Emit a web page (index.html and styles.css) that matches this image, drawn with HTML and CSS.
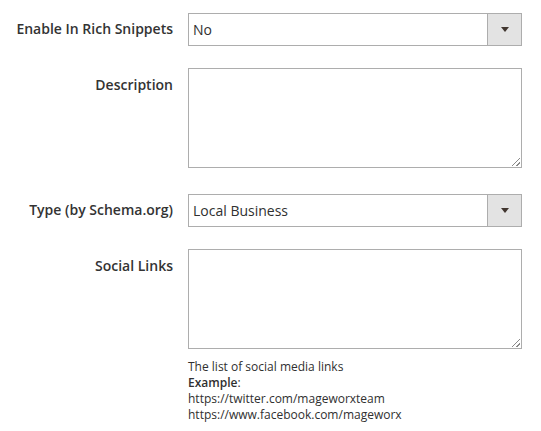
FILE: index.html
```html
<!DOCTYPE html>
<html lang="en">
<head>
  <meta charset="UTF-8">
  <title>Rich Snippets</title>
  <link rel="stylesheet" href="styles.css">
</head>
<body>
  <div class="fieldset">
    <div class="field field-select">
      <label class="field-label">Enable In Rich Snippets</label>
      <div class="control">
        <div class="select">
          <span class="select-value">No</span>
          <span class="select-btn"><span class="arrow"></span></span>
        </div>
      </div>
    </div>

    <div class="field field-text gap-lg">
      <label class="field-label">Description</label>
      <div class="control">
        <div class="textarea"><span class="grip"></span></div>
      </div>
    </div>

    <div class="field field-select">
      <label class="field-label">Type (by Schema.org)</label>
      <div class="control">
        <div class="select">
          <span class="select-value">Local Business</span>
          <span class="select-btn"><span class="arrow"></span></span>
        </div>
      </div>
    </div>

    <div class="field field-text">
      <label class="field-label">Social Links</label>
      <div class="control">
        <div class="textarea"><span class="grip"></span></div>
        <div class="note">
          The list of social media links<br>
          <b>Example</b>:<br>
          https://twitter.com/mageworxteam<br>
          https://www.facebook.com/mageworx
        </div>
      </div>
    </div>
  </div>
</body>
</html>
```

FILE: styles.css
```css
html, body {
  margin: 0;
  padding: 0;
  background: #fff;
  color: #303030;
  font-family: "Open Sans", "Liberation Sans", sans-serif;
  font-size: 14px;
}
.fieldset {
  padding-top: 13px;
}
.field {
  display: grid;
  grid-template-columns: 173px 334px;
  column-gap: 15px;
  margin-bottom: 22px;
}
.field.gap-lg {
  margin-bottom: 26px;
}
.field-label {
  text-align: right;
  font-weight: 600;
  color: #333;
  line-height: 20px;
  padding-top: 6px;
}
.field-text .field-label {
  padding-top: 7px;
}
.select {
  display: flex;
  height: 33px;
  box-sizing: border-box;
  border: 1px solid #adadad;
  background: #fff;
}
.select-value {
  flex: 1;
  padding-left: 4px;
  line-height: 31px;
}
.select-btn {
  width: 33px;
  background: #e3e3e3;
  border-left: 1px solid #adadad;
  display: flex;
  align-items: center;
  justify-content: center;
}
.arrow {
  width: 0;
  height: 0;
  border-left: 4px solid transparent;
  border-right: 4px solid transparent;
  border-top: 5px solid #41362f;
}
.textarea {
  position: relative;
  height: 100px;
  box-sizing: border-box;
  border: 1px solid #adadad;
}
.grip {
  position: absolute;
  right: 1px;
  bottom: 1px;
  width: 8px;
  height: 8px;
  background: linear-gradient(135deg, transparent 45%, #8a8a8a 45%, #8a8a8a 55%, transparent 55%, transparent 72%, #8a8a8a 72%, #8a8a8a 82%, transparent 82%);
}
.note {
  margin-top: 10px;
  font-size: 12px;
  line-height: 16px;
}
.note b {
  font-weight: 600;
}
```
